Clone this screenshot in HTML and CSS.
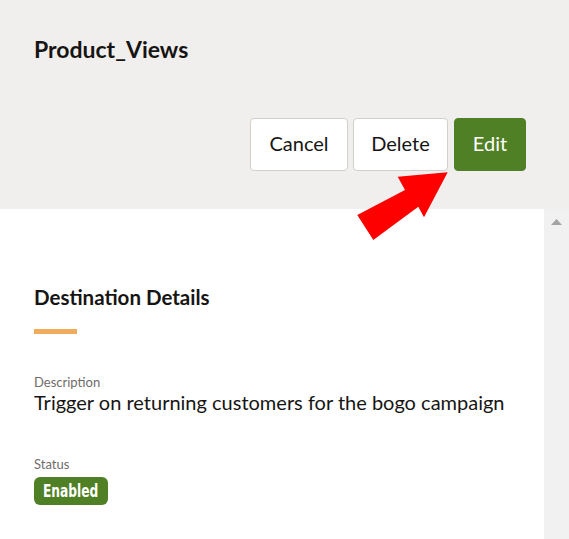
FILE: index.html
```html
<!DOCTYPE html>
<html>
<head>
<meta charset="utf-8">
<link rel="stylesheet" href="styles.css">
</head>
<body>
<div class="page">
  <header class="header">
    <h1 class="title">Product_Views</h1>
    <div class="actions">
      <button class="btn btn-cancel">Cancel</button>
      <button class="btn btn-delete">Delete</button>
      <button class="btn btn-primary">Edit</button>
    </div>
  </header>
  <div class="body">
    <main class="panel">
      <h2 class="section-title">Destination Details</h2>
      <div class="accent"></div>
      <div class="field field-desc">
        <div class="label">Description</div>
        <div class="value">Trigger on returning customers for the bogo campaign</div>
      </div>
      <div class="field field-status">
        <div class="label">Status</div>
        <span class="badge"><span class="badge-text">Enabled</span></span>
      </div>
    </main>
    <div class="scrollbar">
      <svg class="scroll-up" width="11" height="6" viewBox="0 0 11 6"><polygon points="5.5,0 11,6 0,6" fill="#a3a3a3"/></svg>
    </div>
  </div>
  <svg class="pointer" width="569" height="539" viewBox="0 0 569 539">
    <polygon points="447.7,172.3 397.7,176.7 405,190 357.3,215 373.3,240 418.3,206.7 424,217.3" fill="#ff0000"/>
  </svg>
</div>
</body>
</html>
```
FILE: styles.css
```css
html, body {
  margin: 0;
  padding: 0;
}
body {
  font-family: "Lato", "Noto Sans", sans-serif;
  color: #161513;
  background: #f1efed;
  width: 569px;
  height: 539px;
  overflow: hidden;
}
.page {
  position: relative;
  width: 569px;
  height: 539px;
  display: flex;
  flex-direction: column;
}
.header {
  background: #f1efed;
  height: 209px;
  box-sizing: border-box;
  padding: 34px 43px 0 34px;
  display: flex;
  flex-direction: column;
}
.title {
  margin: 0;
  font-size: 23px;
  line-height: 30px;
  font-weight: 700;
}
.actions {
  margin-top: 54px;
  display: flex;
  justify-content: flex-end;
  gap: 5px;
}
.btn {
  font-family: inherit;
  font-size: 20px;
  height: 53px;
  padding: 0 0 3px;
  border: 1px solid #d3cfcb;
  border-radius: 4px;
  background: #ffffff;
  color: #161513;
}
.btn-cancel { width: 98px; }
.btn-delete { width: 95px; }
.btn-primary {
  width: 72px;
  margin-left: 1px;
  background: #508025;
  border-color: #508025;
  color: #ffffff;
}
.body {
  flex: 1;
  display: flex;
}
.panel {
  width: 544px;
  background: #ffffff;
  box-sizing: border-box;
  padding: 74px 20px 0 34px;
}
.section-title {
  margin: 0;
  font-size: 20.5px;
  line-height: 28px;
  font-weight: 700;
}
.accent {
  margin-top: 18px;
  width: 43px;
  height: 5px;
  background: #f0ac5b;
}
.field {
  display: flex;
  flex-direction: column;
  align-items: flex-start;
}
.field-desc {
  margin-top: 40px;
}
.field-status {
  margin-top: 42px;
}
.label {
  font-size: 13px;
  line-height: 16px;
  color: #6f6c69;
}
.value {
  font-size: 20px;
  line-height: 24px;
  white-space: nowrap;
}
.badge {
  margin-top: 5px;
  width: 74px;
  height: 28px;
  display: flex;
  align-items: center;
  justify-content: center;
  border-radius: 6px;
  background: #508025;
  color: #ffffff;
  font-family: "DejaVu Sans Condensed", "DejaVu Sans", sans-serif;
  font-stretch: condensed;
  font-weight: 700;
  font-size: 17px;
  line-height: 20px;
}
.badge-text {
  display: inline-block;
  white-space: nowrap;
  transform: scaleX(0.8);
}
.scrollbar {
  width: 25px;
  background: #f1f1f1;
  display: flex;
  justify-content: center;
  align-items: flex-start;
  padding-top: 10px;
}
.scroll-up {
  display: block;
}
.pointer {
  position: absolute;
  left: 0;
  top: 0;
  pointer-events: none;
}
```
